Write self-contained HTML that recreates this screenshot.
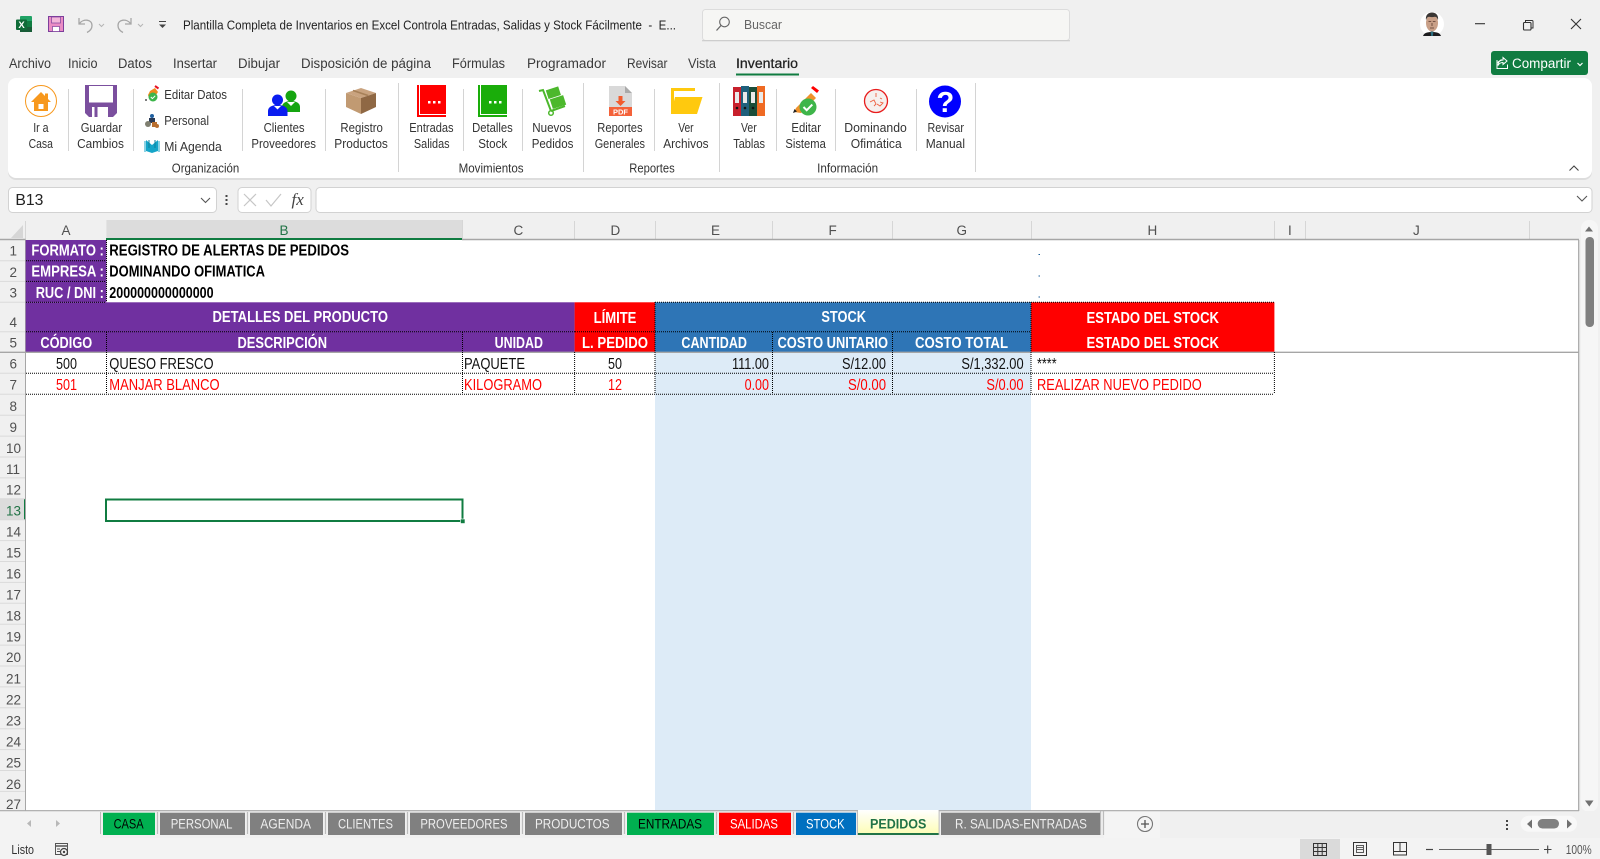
<!DOCTYPE html>
<html lang="es"><head><meta charset="utf-8"><title>Plantilla Completa de Inventarios en Excel</title>
<style>
html,body{margin:0;padding:0;background:#f0f0f0;width:1600px;height:859px;overflow:hidden}
svg{display:block}
text{font-family:"Liberation Sans",sans-serif;white-space:pre}
.u{font-size:13px;fill:#333}
.m{font-size:13.5px;fill:#3a3a3a}
.h{font-size:13.5px;fill:#505050}
.d{font-size:15.5px;fill:#111}
.r{font-size:15.5px;fill:#f00}
.b{font-size:15.5px;font-weight:bold;fill:#000}
.w{font-size:15.5px;font-weight:bold;fill:#fff}
.t{font-size:13.5px;fill:#eee}
.k{font-size:13.5px;fill:#000}
.line{stroke:#000;stroke-width:1;stroke-dasharray:1 1;fill:none}
</style></head><body>
<svg xmlns="http://www.w3.org/2000/svg" width="1600" height="859" viewBox="0 0 1600 859">
<rect width="1600" height="859" fill="#f0f0f0"/>

<!-- title bar -->
<rect x="20" y="16" width="12" height="16" rx="1" fill="#21a366"/><rect x="20" y="21" width="12" height="6" fill="#107c41"/><rect x="20" y="27" width="12" height="5" fill="#185c37"/>
<rect x="16" y="19.5" width="11" height="10.5" rx="1" fill="#0e6b37"/>
<text x="18.4" y="28" style="font-size:9.5px;font-weight:bold;fill:#fff">X</text>
<rect x="48.5" y="16.5" width="15" height="15" fill="#ea8cc4" stroke="#7c3f9c"/><rect x="51.5" y="17" width="9" height="6" fill="#f3b5d9" stroke="#7c3f9c" stroke-width=".7"/><rect x="52.5" y="26.5" width="7" height="5" fill="#fff" stroke="#7c3f9c" stroke-width=".7"/>
<path d="M79 18v6h6M79.5 23.5C83 18.5 92 19 92 25.5C92 28.5 90 31 87 32.5" fill="none" stroke="#a6a6a6" stroke-width="1.3"/>
<path d="M99 24l2.5 2.5 2.5-2.5" fill="none" stroke="#b5b5b5"/>
<path d="M131 18v6h-6M130.5 23.5C127 18.5 118 19 118 25.5C118 28.5 120 31 123 32.5" fill="none" stroke="#a6a6a6" stroke-width="1.3"/>
<path d="M138 24l2.5 2.5 2.5-2.5" fill="none" stroke="#b5b5b5"/>
<path d="M159 21.5h7" stroke="#444" fill="none"/><path d="M159 24.5h7l-3.5 3.5z" fill="#444"/>
<text x="183" y="29.5" class="u" textLength="493" lengthAdjust="spacingAndGlyphs" style="fill:#222">Plantilla Completa de Inventarios en Excel Controla Entradas, Salidas y Stock Fácilmente  -  E...</text>

<rect x="702.5" y="9.5" width="367" height="31" rx="3" fill="#f6f6f4" stroke="#dcdcdc"/>
<path d="M702 40.8h368" stroke="#c8c8c8" stroke-width="1"/>
<circle cx="724.500" cy="22" r="4.800" fill="none" stroke="#666" stroke-width="1.100"/><path d="M721 25.500l-4.500 5" stroke="#666" stroke-width="1.300"/>
<text x="744" y="29" class="u" textLength="38" lengthAdjust="spacingAndGlyphs" style="fill:#666">Buscar</text>

<!-- avatar -->
<circle cx="1432" cy="24" r="12" fill="#fff"/>
<path d="M1423 36c1-3 4-4 9-4s8 1 9 4z" fill="#1d1d1f"/><path d="M1430.500 31.500h3l-.7 4.500h-1.600z" fill="#2c6f80"/>
<ellipse cx="1432" cy="23" rx="6" ry="8.500" fill="#c9a088"/>
<path d="M1426 20c-.8-5 2.500-7.500 6-7.500s6.800 2.500 6 7.500c-.8-2-1.500-3-3-3.200-2 .5-4 .5-6 0-1.500.2-2.200 1.200-3 3.200z" fill="#3a3634"/>
<path d="M1428.500 21.500h2.700M1432.800 21.500h2.700M1430 28h4M1432 23v3" stroke="#5a3b30" stroke-width=".8" fill="none"/>

<!-- window controls -->
<path d="M1475 23.700h10" stroke="#333" stroke-width="1.100"/>
<rect x="1523.500" y="22.500" width="7.500" height="7.500" rx="1" fill="none" stroke="#333" stroke-width="1.100"/><path d="M1525.500 22v-1.500h6.500a1 1 0 0 1 1 1v6.500h-1.500" fill="none" stroke="#333"/>
<path d="M1571 19l10 10M1581 19l-10 10" stroke="#333" stroke-width="1.100"/>

<!-- tabs -->
<text x="9" y="68" class="m" textLength="42" lengthAdjust="spacingAndGlyphs">Archivo</text>
<text x="68" y="68" class="m" textLength="29.500" lengthAdjust="spacingAndGlyphs">Inicio</text>
<text x="118" y="68" class="m" textLength="34" lengthAdjust="spacingAndGlyphs">Datos</text>
<text x="173" y="68" class="m" textLength="44" lengthAdjust="spacingAndGlyphs">Insertar</text>
<text x="238" y="68" class="m" textLength="42" lengthAdjust="spacingAndGlyphs">Dibujar</text>
<text x="301" y="68" class="m" textLength="130" lengthAdjust="spacingAndGlyphs">Disposición de página</text>
<text x="452" y="68" class="m" textLength="53" lengthAdjust="spacingAndGlyphs">Fórmulas</text>
<text x="527" y="68" class="m" textLength="79" lengthAdjust="spacingAndGlyphs">Programador</text>
<text x="627" y="68" class="m" textLength="40.500" lengthAdjust="spacingAndGlyphs">Revisar</text>
<text x="688" y="68" class="m" textLength="28" lengthAdjust="spacingAndGlyphs">Vista</text>
<text x="736" y="68" class="m" textLength="62" lengthAdjust="spacingAndGlyphs" style="fill:#222;stroke:#222;stroke-width:.25">Inventario</text>
<rect x="736" y="73.500" width="63" height="2" fill="#107c41"/>

<rect x="1491" y="51" width="97" height="24" rx="3" fill="#107c41"/>
<path d="M1497 60v8.500h10.500v-4M1497.500 62.500l4-3M1503 57.500l4 3.500-4 3.500v-2c-2.500 0-4 1-5 3 0-3.500 2-5.500 5-5.500z" fill="none" stroke="#fff" stroke-width="1"/>
<text x="1512" y="68" class="m" textLength="59" lengthAdjust="spacingAndGlyphs" style="fill:#fff">Compartir</text>
<path d="M1577.500 63l2.500 2.500 2.500-2.500" fill="none" stroke="#fff" stroke-width="1.200"/>

<!-- ribbon -->
<rect x="8" y="80" width="1584" height="100" rx="8" fill="#000" opacity=".08"/>
<rect x="8" y="78" width="1584" height="100" rx="8" fill="#fff"/>
<g stroke="#d4d4d4" stroke-width="1">
<path d="M68.500 89v62M133.500 89v62M242.500 89v62M325.500 89v62M463.500 89v62M522.500 89v62M654.500 89v62M776.500 89v62M835.500 89v62M916.500 89v62"/>
<path d="M398.500 83v89M583.500 83v89M719.500 83v89M975.500 83v89"/>
</g>
<path d="M1569.500 170.500l4.500-4.500 4.500 4.500" fill="none" stroke="#444" stroke-width="1.100"/>

<g class="labels">
<text x="33.200" y="132" class="u" textLength="15.400" lengthAdjust="spacingAndGlyphs">Ir a</text><text x="28.600" y="148" class="u" textLength="24.300" lengthAdjust="spacingAndGlyphs">Casa</text>
<text x="80.700" y="132" class="u" textLength="41.400" lengthAdjust="spacingAndGlyphs">Guardar</text><text x="77.100" y="148" class="u" textLength="46.800" lengthAdjust="spacingAndGlyphs">Cambios</text>
<text x="263.600" y="132" class="u" textLength="41" lengthAdjust="spacingAndGlyphs">Clientes</text><text x="251.400" y="148" class="u" textLength="64.600" lengthAdjust="spacingAndGlyphs">Proveedores</text>
<text x="340.400" y="132" class="u" textLength="42.500" lengthAdjust="spacingAndGlyphs">Registro</text><text x="334.300" y="148" class="u" textLength="53.600" lengthAdjust="spacingAndGlyphs">Productos</text>
<text x="409.300" y="132" class="u" textLength="44.300" lengthAdjust="spacingAndGlyphs">Entradas</text><text x="413.900" y="148" class="u" textLength="35.700" lengthAdjust="spacingAndGlyphs">Salidas</text>
<text x="472.100" y="132" class="u" textLength="40.700" lengthAdjust="spacingAndGlyphs">Detalles</text><text x="478.200" y="148" class="u" textLength="29" lengthAdjust="spacingAndGlyphs">Stock</text>
<text x="532.300" y="132" class="u" textLength="39.300" lengthAdjust="spacingAndGlyphs">Nuevos</text><text x="531.700" y="148" class="u" textLength="41.700" lengthAdjust="spacingAndGlyphs">Pedidos</text>
<text x="597.300" y="132" class="u" textLength="45.300" lengthAdjust="spacingAndGlyphs">Reportes</text><text x="594.700" y="148" class="u" textLength="50.300" lengthAdjust="spacingAndGlyphs">Generales</text>
<text x="678.200" y="132" class="u" textLength="15.400" lengthAdjust="spacingAndGlyphs">Ver</text><text x="663.200" y="148" class="u" textLength="45.400" lengthAdjust="spacingAndGlyphs">Archivos</text>
<text x="741" y="132" class="u" textLength="15.700" lengthAdjust="spacingAndGlyphs">Ver</text><text x="733.200" y="148" class="u" textLength="31.800" lengthAdjust="spacingAndGlyphs">Tablas</text>
<text x="791.400" y="132" class="u" textLength="29.600" lengthAdjust="spacingAndGlyphs">Editar</text><text x="785.400" y="148" class="u" textLength="40.400" lengthAdjust="spacingAndGlyphs">Sistema</text>
<text x="844.300" y="132" class="u" textLength="62.500" lengthAdjust="spacingAndGlyphs">Dominando</text><text x="850.700" y="148" class="u" textLength="51" lengthAdjust="spacingAndGlyphs">Ofimática</text>
<text x="927.500" y="132" class="u" textLength="36.400" lengthAdjust="spacingAndGlyphs">Revisar</text><text x="925.700" y="148" class="u" textLength="39.300" lengthAdjust="spacingAndGlyphs">Manual</text>
<text x="164.300" y="99" class="u" textLength="62.700" lengthAdjust="spacingAndGlyphs">Editar Datos</text>
<text x="164.300" y="125" class="u" textLength="44.700" lengthAdjust="spacingAndGlyphs">Personal</text>
<text x="164.300" y="151" class="u" textLength="57.500" lengthAdjust="spacingAndGlyphs">Mi Agenda</text>
<text x="171.800" y="172.500" class="u" textLength="67.500" lengthAdjust="spacingAndGlyphs">Organización</text>
<text x="458.600" y="172.500" class="u" textLength="65" lengthAdjust="spacingAndGlyphs">Movimientos</text>
<text x="629.300" y="172.500" class="u" textLength="45.400" lengthAdjust="spacingAndGlyphs">Reportes</text>
<text x="817.100" y="172.500" class="u" textLength="61" lengthAdjust="spacingAndGlyphs">Información</text>
</g>

<!-- ribbon icons -->
<circle cx="41" cy="101" r="15.500" fill="#fff" stroke="#f7981d" stroke-width="1"/>
<path d="M31 102l10-10 4 4v-2.500h3v5.500l3 3h-3v9H34v-9z" fill="#f7981d"/><rect x="38.500" y="104" width="5" height="5" fill="#fff"/>

<path d="M85 85h32v28l-4 4H89l-4-4z" fill="#7b4f9e"/><rect x="89" y="86" width="24" height="16.500" fill="#fff"/>
<rect x="92" y="107" width="16" height="10" fill="#fff"/><rect x="94.500" y="107" width="3" height="10" fill="#7b4f9e"/>

<!-- small icons -->
<path d="M150 91l5-3 3 4-4 6h-5l-1-3z" fill="#ef8a1d"/><path d="M155 86l3.500 2.500" stroke="#e81123" stroke-width="2"/>
<circle cx="153" cy="97" r="4.500" fill="#3cb54a"/><path d="M150.800 97l1.600 1.600 2.800-2.800" stroke="#fff" fill="none" stroke-width="1"/><circle cx="146" cy="100" r=".9" fill="#222"/>
<circle cx="152" cy="116" r="2" fill="#2060a0"/><rect x="149" y="118" width="6" height="5" fill="#2a3a55"/><circle cx="148" cy="124" r="3" fill="#7f7f70"/><rect x="152" y="122" width="5" height="5" fill="#b86f30"/><circle cx="157" cy="126" r="2" fill="#b86f30"/>
<path d="M146 140l6 5 6-5v11l-6 2-6-2z" fill="#15a5c8"/><path d="M145 141v11M159 141v11" stroke="#15a5c8"/><path d="M149 140v8M155 140v8" stroke="#0d7f9d"/>

<!-- clients -->
<circle cx="291" cy="96" r="5.500" fill="#15a510"/><path d="M282 112v-5c0-4 4-6 9-6s9 2 9 6v5z" fill="#15a510"/><path d="M287 102l4 4 4-4z" fill="#fff"/>
<circle cx="277.500" cy="100" r="5.500" fill="#0a1df0"/><path d="M268 116v-5c0-4 4-6 9.500-6s10 2 10 6v5z" fill="#0a1df0"/><path d="M274 106l3.500 3.500 3.500-3.500z" fill="#fff"/>

<!-- box -->
<path d="M361 88l15 5-15 5-15-5z" fill="#c9a37f"/><path d="M346 93l15 5v16l-15-7z" fill="#c19a72"/><path d="M376 93l-15 5v16l15-7z" fill="#8f6844"/><path d="M353 90.500l15 5" stroke="#a78058" stroke-width="1.500"/>

<!-- books -->
<rect x="420" y="85" width="26" height="29" fill="#f00"/><rect x="417" y="85" width="2" height="32" fill="#f00"/><rect x="419" y="115" width="27" height="2" fill="#f00"/>
<rect x="428" y="101" width="2.500" height="2.500" fill="#fff"/><rect x="433" y="101" width="2.500" height="2.500" fill="#fff"/><rect x="438" y="101" width="2.500" height="2.500" fill="#fff"/>
<rect x="481" y="85" width="26" height="29" fill="#1aad0a"/><rect x="478" y="85" width="2" height="32" fill="#1aad0a"/><rect x="480" y="115" width="27" height="2" fill="#1aad0a"/>
<rect x="489" y="101" width="2.500" height="2.500" fill="#fff"/><rect x="494" y="101" width="2.500" height="2.500" fill="#fff"/><rect x="499" y="101" width="2.500" height="2.500" fill="#fff"/>

<!-- hand truck -->
<path d="M539 91l4-1 8 21M551 111l14-5" fill="none" stroke="#4cb82c" stroke-width="2"/><circle cx="551" cy="113" r="2.300" fill="none" stroke="#4cb82c" stroke-width="1.500"/>
<rect x="-7" y="-5" width="13" height="9" transform="translate(554 93) rotate(-18)" fill="#4cb82c"/><rect x="-7" y="-5" width="14" height="10" transform="translate(558 102) rotate(-18)" fill="#4cb82c"/>

<!-- pdf -->
<path d="M609 86h16l7 7v23h-23z" fill="#d9d9d9"/><path d="M625 86l7 7h-7z" fill="#aaa"/>
<path d="M618.500 96h4v5h3l-5 5-5-5h3z" fill="#f25c2e"/>
<rect x="609" y="107" width="23" height="9" fill="#f4623a"/><text x="613" y="114.500" style="font-size:7.500px;font-weight:bold;fill:#fff">PDF</text>

<!-- folder -->
<path d="M671 88h24v3h-21v23h-3z" fill="#ffc90e"/><path d="M675 97h27.500l-5.500 17h-26z" fill="#ffc90e"/>

<!-- binders -->
<rect x="733" y="87" width="8" height="29" fill="#c7202c"/><rect x="741" y="86" width="8" height="30" fill="#1f607c"/><rect x="749" y="87" width="8" height="29" fill="#1b4d38"/><rect x="757" y="86" width="8" height="30" fill="#ef6a23"/>
<g fill="#e9e9e9"><rect x="735" y="92" width="4" height="11"/><rect x="743" y="92" width="4" height="11"/><rect x="751" y="92" width="4" height="11"/><rect x="759" y="92" width="4" height="11"/></g>
<g fill="#111"><circle cx="737" cy="108" r="1.300"/><circle cx="745" cy="108" r="1.300"/><circle cx="753" cy="108" r="1.300"/></g>

<!-- editar sistema -->
<path d="M794 112l2-4 15-15 5 5-15 15z" fill="#f0912b"/><path d="M811 88l2-2 6 4.500-2 2.500z" fill="#f00"/><path d="M793 113l1.500-4 2.500 2.500z" fill="#222"/>
<circle cx="808" cy="107" r="8.500" fill="#3eb54a"/><path d="M803.500 107l3.200 3.200 5.600-5.600" fill="none" stroke="#fff" stroke-width="2"/>

<!-- dominando -->
<circle cx="876" cy="101" r="11.500" fill="#f6f0ee" stroke="#e81c1c" stroke-width="1.300"/>
<path d="M876 93v4M870 102l4-2 2 4-2 2M880 102l3 1-3 3-3-2M880 98l2 1" fill="none" stroke="#ee6040" stroke-width=".9"/>

<!-- help -->
<circle cx="945" cy="101.500" r="16" fill="#00f"/>
<text x="936.500" y="112" style="font-size:29px;font-weight:bold;fill:#fff">?</text>

<!-- formula bar -->
<rect x="8.500" y="187.500" width="208" height="25" rx="4" fill="#fff" stroke="#d2d2d2"/>
<text x="15.400" y="205" textLength="28" lengthAdjust="spacingAndGlyphs" style="font-size:16px;fill:#222">B13</text>
<path d="M201 198l4.500 4.500 4.500-4.500" fill="none" stroke="#555" stroke-width="1.100"/>
<g fill="#444"><rect x="225.500" y="195" width="2" height="2"/><rect x="225.500" y="199" width="2" height="2"/><rect x="225.500" y="203" width="2" height="2"/></g>
<rect x="238" y="187.500" width="73" height="25" rx="4" fill="#fff" stroke="#d2d2d2"/>
<path d="M244 194l12 12M256 194l-12 12" stroke="#c6c6c6" stroke-width="1.200"/>
<path d="M266 200l5 6 10-12" stroke="#c6c6c6" stroke-width="1.200" fill="none"/>
<text x="291.500" y="205" style="font-family:'Liberation Serif',serif;font-style:italic;font-size:17px;fill:#444">fx</text>
<rect x="316" y="187.500" width="1276" height="25" rx="4" fill="#fff" stroke="#d2d2d2"/>
<path d="M1577 196l5 5 5-5" fill="none" stroke="#555" stroke-width="1.100"/>

<!-- sheet -->
<rect x="0" y="220" width="1581" height="591" fill="#f0f0f0"/>
<rect x="25.700" y="240" width="1553" height="570.500" fill="#fff"/>
<rect x="655" y="352" width="376" height="458.500" fill="#ddebf7"/>

<!-- col headers -->
<rect x="106.400" y="220" width="355.600" height="19" fill="#dcdcdc"/>
<path d="M11 238l12-13v13z" fill="#d6d6d6"/>
<g stroke="#d6d6d6"><path d="M25.500 221v18M574.500 221v18M655.500 221v18M772.500 221v18M892.500 221v18M1031.500 221v18M1274.500 221v18M1305.500 221v18M1529.500 221v18M462.500 220v19"/></g>
<path d="M0 239.500H25.700M462 239.500H1579" stroke="#a6a6a6" stroke-width="1.400"/>
<rect x="106" y="238" width="356" height="2" fill="#107c41"/>
<text x="61.500" y="235" class="h">A</text><text x="279.500" y="235" class="h" style="fill:#217346">B</text><text x="513.500" y="235" class="h">C</text><text x="610.500" y="235" class="h">D</text><text x="711" y="235" class="h">E</text><text x="828.500" y="235" class="h">F</text><text x="956.500" y="235" class="h">G</text><text x="1147.500" y="235" class="h">H</text><text x="1288" y="235" class="h">I</text><text x="1413" y="235" class="h">J</text>

<!-- row headers -->
<rect x="0" y="498.800" width="25.700" height="21" fill="#dcdcdc"/>
<rect x="24" y="498.800" width="2" height="21" fill="#107c41"/>
<path d="M25.500 240V810.500" stroke="#a6a6a6"/>
<path d="M0 260.700h25M0 281.400h25M0 302.300h25M0 331.700h25M0 373.300h25M0 394.300h25M0 415.200h25M0 436.100h25M0 457h25M0 477.900h25M0 498.800h25M0 519.700h25M0 540.600h25M0 561.500h25M0 582.400h25M0 603.300h25M0 624.200h25M0 645.100h25M0 666h25M0 686.900h25M0 707.800h25M0 728.700h25M0 749.600h25M0 770.500h25M0 791.400h25" stroke="#dadada"/>
<g class="rows">
<text x="9.500" y="255.500" class="h">1</text><text x="9.500" y="277" class="h">2</text><text x="9.500" y="297.500" class="h">3</text><text x="9.500" y="327" class="h">4</text><text x="9.500" y="347.500" class="h">5</text><text x="9.500" y="368.500" class="h">6</text><text x="9.500" y="389.500" class="h">7</text><text x="9.500" y="411" class="h">8</text><text x="9.500" y="432" class="h">9</text>
<text x="6" y="453" class="h">10</text><text x="6" y="474" class="h">11</text><text x="6" y="494.500" class="h">12</text><text x="6" y="515.500" class="h" style="fill:#217346">13</text><text x="6" y="536.500" class="h">14</text><text x="6" y="557.500" class="h">15</text><text x="6" y="578.500" class="h">16</text><text x="6" y="599.500" class="h">17</text><text x="6" y="620.500" class="h">18</text><text x="6" y="641.500" class="h">19</text><text x="6" y="662" class="h">20</text><text x="6" y="683.500" class="h">21</text><text x="6" y="704.500" class="h">22</text><text x="6" y="725.500" class="h">23</text><text x="6" y="746.500" class="h">24</text><text x="6" y="767.500" class="h">25</text><text x="6" y="789" class="h">26</text><text x="6" y="809" class="h">27</text>
</g>

<!-- filled cells -->
<rect x="25.700" y="240" width="80.700" height="62.300" fill="#7030a0"/>
<rect x="25.700" y="302.300" width="548.900" height="49.700" fill="#7030a0"/>
<rect x="574.600" y="302.300" width="80.400" height="49.700" fill="#f00"/>
<rect x="655" y="302.300" width="376" height="49.700" fill="#2e75b6"/>
<rect x="1031" y="302.300" width="243.400" height="49.700" fill="#f00"/>
<path d="M0 352.300H1579" stroke="#a6a6a6" stroke-width="1.400"/>

<!-- dotted borders -->
<g class="line">
<path d="M26 260.700h80M26 281.400h80M26 302.300h80M106.500 240v62M655 302.300h619M26 331.700h549M575 331.700h80M655 331.700h376"/>
<path d="M106.500 332v62M462.500 332v62M574.600 352v42M655 302v92M772.500 332v62M892.500 332v62M1031 302v92M1274.400 352v42"/>
<path d="M26 373.300h1248M26 394.300h1248"/>
</g>

<!-- cell text -->
<text x="31.400" y="255.500" class="w" textLength="72.500" lengthAdjust="spacingAndGlyphs">FORMATO :</text>
<text x="31.400" y="276.500" class="w" textLength="72.500" lengthAdjust="spacingAndGlyphs">EMPRESA :</text>
<text x="35.700" y="298" class="w" textLength="68.200" lengthAdjust="spacingAndGlyphs">RUC / DNI :</text>
<text x="109.300" y="255.500" class="b" textLength="239.700" lengthAdjust="spacingAndGlyphs">REGISTRO DE ALERTAS DE PEDIDOS</text>
<text x="109.300" y="276.500" class="b" textLength="155.700" lengthAdjust="spacingAndGlyphs">DOMINANDO OFIMATICA</text>
<text x="109.300" y="298" class="b" textLength="104.300" lengthAdjust="spacingAndGlyphs">200000000000000</text>
<text x="212.500" y="322" class="w" textLength="175.500" lengthAdjust="spacingAndGlyphs">DETALLES DEL PRODUCTO</text>
<text x="40.400" y="348" class="w" textLength="51.800" lengthAdjust="spacingAndGlyphs">CÓDIGO</text>
<text x="237.500" y="348" class="w" textLength="89.500" lengthAdjust="spacingAndGlyphs">DESCRIPCIÓN</text>
<text x="494.600" y="348" class="w" textLength="48.400" lengthAdjust="spacingAndGlyphs">UNIDAD</text>
<text x="593.600" y="323" class="w" textLength="42.800" lengthAdjust="spacingAndGlyphs">LÍMITE</text>
<text x="582" y="348" class="w" textLength="66" lengthAdjust="spacingAndGlyphs">L. PEDIDO</text>
<text x="821.400" y="322" class="w" textLength="44.600" lengthAdjust="spacingAndGlyphs">STOCK</text>
<text x="681.400" y="348" class="w" textLength="65.600" lengthAdjust="spacingAndGlyphs">CANTIDAD</text>
<text x="777.500" y="348" class="w" textLength="110.500" lengthAdjust="spacingAndGlyphs">COSTO UNITARIO</text>
<text x="915" y="348" class="w" textLength="93" lengthAdjust="spacingAndGlyphs">COSTO TOTAL</text>
<text x="1086.500" y="323" class="w" textLength="132.500" lengthAdjust="spacingAndGlyphs">ESTADO DEL STOCK</text>
<text x="1086.500" y="348" class="w" textLength="132.500" lengthAdjust="spacingAndGlyphs">ESTADO DEL STOCK</text>

<text x="56" y="369" class="d" textLength="21" lengthAdjust="spacingAndGlyphs">500</text>
<text x="109.300" y="369" class="d" textLength="104.300" lengthAdjust="spacingAndGlyphs">QUESO FRESCO</text>
<text x="464" y="369" class="d" textLength="61" lengthAdjust="spacingAndGlyphs">PAQUETE</text>
<text x="608" y="369" class="d" textLength="14" lengthAdjust="spacingAndGlyphs">50</text>
<text x="732" y="369" class="d" textLength="37" lengthAdjust="spacingAndGlyphs">111.00</text>
<text x="842" y="369" class="d" textLength="44" lengthAdjust="spacingAndGlyphs">S/12.00</text>
<text x="961.400" y="369" class="d" textLength="62.200" lengthAdjust="spacingAndGlyphs">S/1,332.00</text>
<text x="1037" y="369" class="d" textLength="19.600" lengthAdjust="spacingAndGlyphs">****</text>

<text x="56" y="390" class="r" textLength="21" lengthAdjust="spacingAndGlyphs">501</text>
<text x="109.300" y="390" class="r" textLength="110.300" lengthAdjust="spacingAndGlyphs">MANJAR BLANCO</text>
<text x="464" y="390" class="r" textLength="78" lengthAdjust="spacingAndGlyphs">KILOGRAMO</text>
<text x="608" y="390" class="r" textLength="14" lengthAdjust="spacingAndGlyphs">12</text>
<text x="744.600" y="390" class="r" textLength="24.400" lengthAdjust="spacingAndGlyphs">0.00</text>
<text x="848" y="390" class="r" textLength="38" lengthAdjust="spacingAndGlyphs">S/0.00</text>
<text x="986.400" y="390" class="r" textLength="37.200" lengthAdjust="spacingAndGlyphs">S/0.00</text>
<text x="1037" y="390" class="r" textLength="164.700" lengthAdjust="spacingAndGlyphs">REALIZAR NUEVO PEDIDO</text>

<rect x="1038.500" y="254" width="1.500" height="1" fill="#1f5f99"/><rect x="1038.500" y="275.500" width="1.500" height="1" fill="#1f5f99"/><rect x="1038.500" y="296.500" width="1.500" height="1" fill="#1f5f99"/>

<!-- active cell -->
<rect x="106" y="499.500" width="356.500" height="21.500" fill="none" stroke="#107c41" stroke-width="2"/>
<rect x="460.500" y="519" width="4.500" height="4.500" fill="#107c41" stroke="#fff" stroke-width=".6"/>

<!-- right edge + v scroll -->
<rect x="1579" y="220" width="21" height="639" fill="#f0f0f0"/>
<path d="M1578.700 240V811" stroke="#a6a6a6" stroke-width="1.200"/>
<rect x="1581" y="220" width="17" height="592" rx="8" fill="#f6f6f6"/>
<path d="M1585 231.500l4-5 4 5z" fill="#707070"/>
<rect x="1585.500" y="237" width="8.500" height="90" rx="4" fill="#808080"/>
<path d="M1585 800.500h8.500l-4.200 6z" fill="#707070"/>

<!-- bottom strip -->
<rect x="0" y="811" width="1600" height="27" fill="#f0f0f0"/>
<rect x="0" y="811" width="100" height="27" fill="#f3f3f3"/>
<rect x="1104" y="811" width="56" height="27" fill="#f4f4f4"/>
<path d="M0 810.700h858M938.500 810.700H1579" stroke="#a8a8a8" stroke-width="1.200"/>
<path d="M31 820v7l-4-3.500z" fill="#b8b8b8"/><path d="M56 820v7l4-3.500z" fill="#b8b8b8"/>
<path d="M100.500 812v22" stroke="#bbb"/>
<g stroke="#bcbcbc" stroke-width="1.200"><path d="M157.500 812v22M247.500 812v22M325.500 812v22M407.500 812v22M522.500 812v22M624.500 812v22M716.500 812v22M793.500 812v22M857.500 811v24M939 811v24M1100.500 811v24M1103.500 811v24"/></g>

<rect x="103" y="812.700" width="52" height="22.300" fill="#00b050"/><text x="113.600" y="828.500" class="k" textLength="30" lengthAdjust="spacingAndGlyphs">CASA</text>
<rect x="160" y="812.700" width="85" height="22.300" fill="#808080"/><text x="170.700" y="828.500" class="t" textLength="61.800" lengthAdjust="spacingAndGlyphs">PERSONAL</text>
<rect x="250" y="812.700" width="73" height="22.300" fill="#808080"/><text x="260.400" y="828.500" class="t" textLength="50.600" lengthAdjust="spacingAndGlyphs">AGENDA</text>
<rect x="328" y="812.700" width="77" height="22.300" fill="#808080"/><text x="338" y="828.500" class="t" textLength="55" lengthAdjust="spacingAndGlyphs">CLIENTES</text>
<rect x="410" y="812.700" width="110" height="22.300" fill="#808080"/><text x="420.400" y="828.500" class="t" textLength="87.100" lengthAdjust="spacingAndGlyphs">PROVEEDORES</text>
<rect x="525" y="812.700" width="97" height="22.300" fill="#808080"/><text x="535" y="828.500" class="t" textLength="74.600" lengthAdjust="spacingAndGlyphs">PRODUCTOS</text>
<rect x="627" y="812.700" width="87" height="22.300" fill="#00b050"/><text x="638" y="828.500" class="k" textLength="64" lengthAdjust="spacingAndGlyphs">ENTRADAS</text>
<rect x="719" y="812.700" width="72" height="22.300" fill="#f00"/><text x="730" y="828.500" class="t" style="fill:#fff" textLength="48" lengthAdjust="spacingAndGlyphs">SALIDAS</text>
<rect x="796" y="812.700" width="60" height="22.300" fill="#0070c0"/><text x="806" y="828.500" class="t" style="fill:#fff" textLength="38.600" lengthAdjust="spacingAndGlyphs">STOCK</text>
<defs><linearGradient id="py" x1="0" y1="0" x2="0" y2="1"><stop offset="0" stop-color="#fff"/><stop offset="1" stop-color="#fdfdb8"/></linearGradient></defs>
<rect x="858" y="810" width="80.600" height="23" fill="url(#py)"/><rect x="858" y="833" width="80.600" height="2" fill="#217346"/>
<text x="870" y="828.500" textLength="56.400" lengthAdjust="spacingAndGlyphs" style="font-size:13.500px;font-weight:bold;fill:#217346">PEDIDOS</text>
<rect x="941" y="812.700" width="159" height="22.300" fill="#808080"/><text x="955" y="828.500" class="t" textLength="132" lengthAdjust="spacingAndGlyphs">R. SALIDAS-ENTRADAS</text>

<circle cx="1145" cy="824" r="7.500" fill="none" stroke="#777" stroke-width="1.100"/><path d="M1141 824h8M1145 820v8" stroke="#555" stroke-width="1.300"/>
<g fill="#444"><rect x="1506" y="820" width="2" height="2"/><rect x="1506" y="824" width="2" height="2"/><rect x="1506" y="828" width="2" height="2"/></g>
<rect x="1520.700" y="815.700" width="56.300" height="16" rx="8" fill="#f8f8f8"/>
<path d="M1532 819.500v9l-5-4.500z" fill="#707070"/><rect x="1537.700" y="819" width="21.300" height="9.500" rx="4.700" fill="#808080"/><path d="M1567 819.500v9l5-4.500z" fill="#707070"/>

<!-- status bar -->
<rect x="0" y="838" width="1600" height="21" fill="#f3f3f3"/>
<text x="11.400" y="854" class="u" textLength="22.600" lengthAdjust="spacingAndGlyphs">Listo</text>
<rect x="55.500" y="843.500" width="12" height="11" fill="none" stroke="#555"/><path d="M55.500 846h12" stroke="#555" stroke-width="1.500"/><path d="M57 849h3M57 851.500h3" stroke="#555"/><circle cx="64" cy="852" r="3.500" fill="#f3f3f3" stroke="#444" stroke-width="1.200"/><circle cx="64" cy="852" r="1.200" fill="#444"/>
<rect x="1300" y="839" width="40" height="20" fill="#dadada"/>
<path d="M1313.500 843.500h13v12h-13zM1313.500 847.500h13M1313.500 851.500h13M1317.800 843.500v12M1322.200 843.500v12" fill="none" stroke="#333"/>
<rect x="1353.500" y="842.500" width="13" height="13" fill="none" stroke="#333"/><rect x="1356.500" y="845.500" width="7" height="7" fill="none" stroke="#333" stroke-width=".8"/><path d="M1357 847.500h6M1357 849.500h6" stroke="#333" stroke-width=".7"/>
<path d="M1393.500 842.500h13v12.500h-13zM1400 843v8.500M1394 851.500h12.500" fill="none" stroke="#333"/>
<path d="M1426 849.500h7" stroke="#444" stroke-width="1.200"/><path d="M1439 849.500h100" stroke="#666"/>
<rect x="1486.500" y="844" width="5" height="11" fill="#555"/>
<path d="M1544 849.500h7.500M1547.700 845.500v8" stroke="#444" stroke-width="1.100"/>
<text x="1565.700" y="854" class="u" textLength="26" lengthAdjust="spacingAndGlyphs" style="fill:#555">100%</text>
</svg>
</body></html>
